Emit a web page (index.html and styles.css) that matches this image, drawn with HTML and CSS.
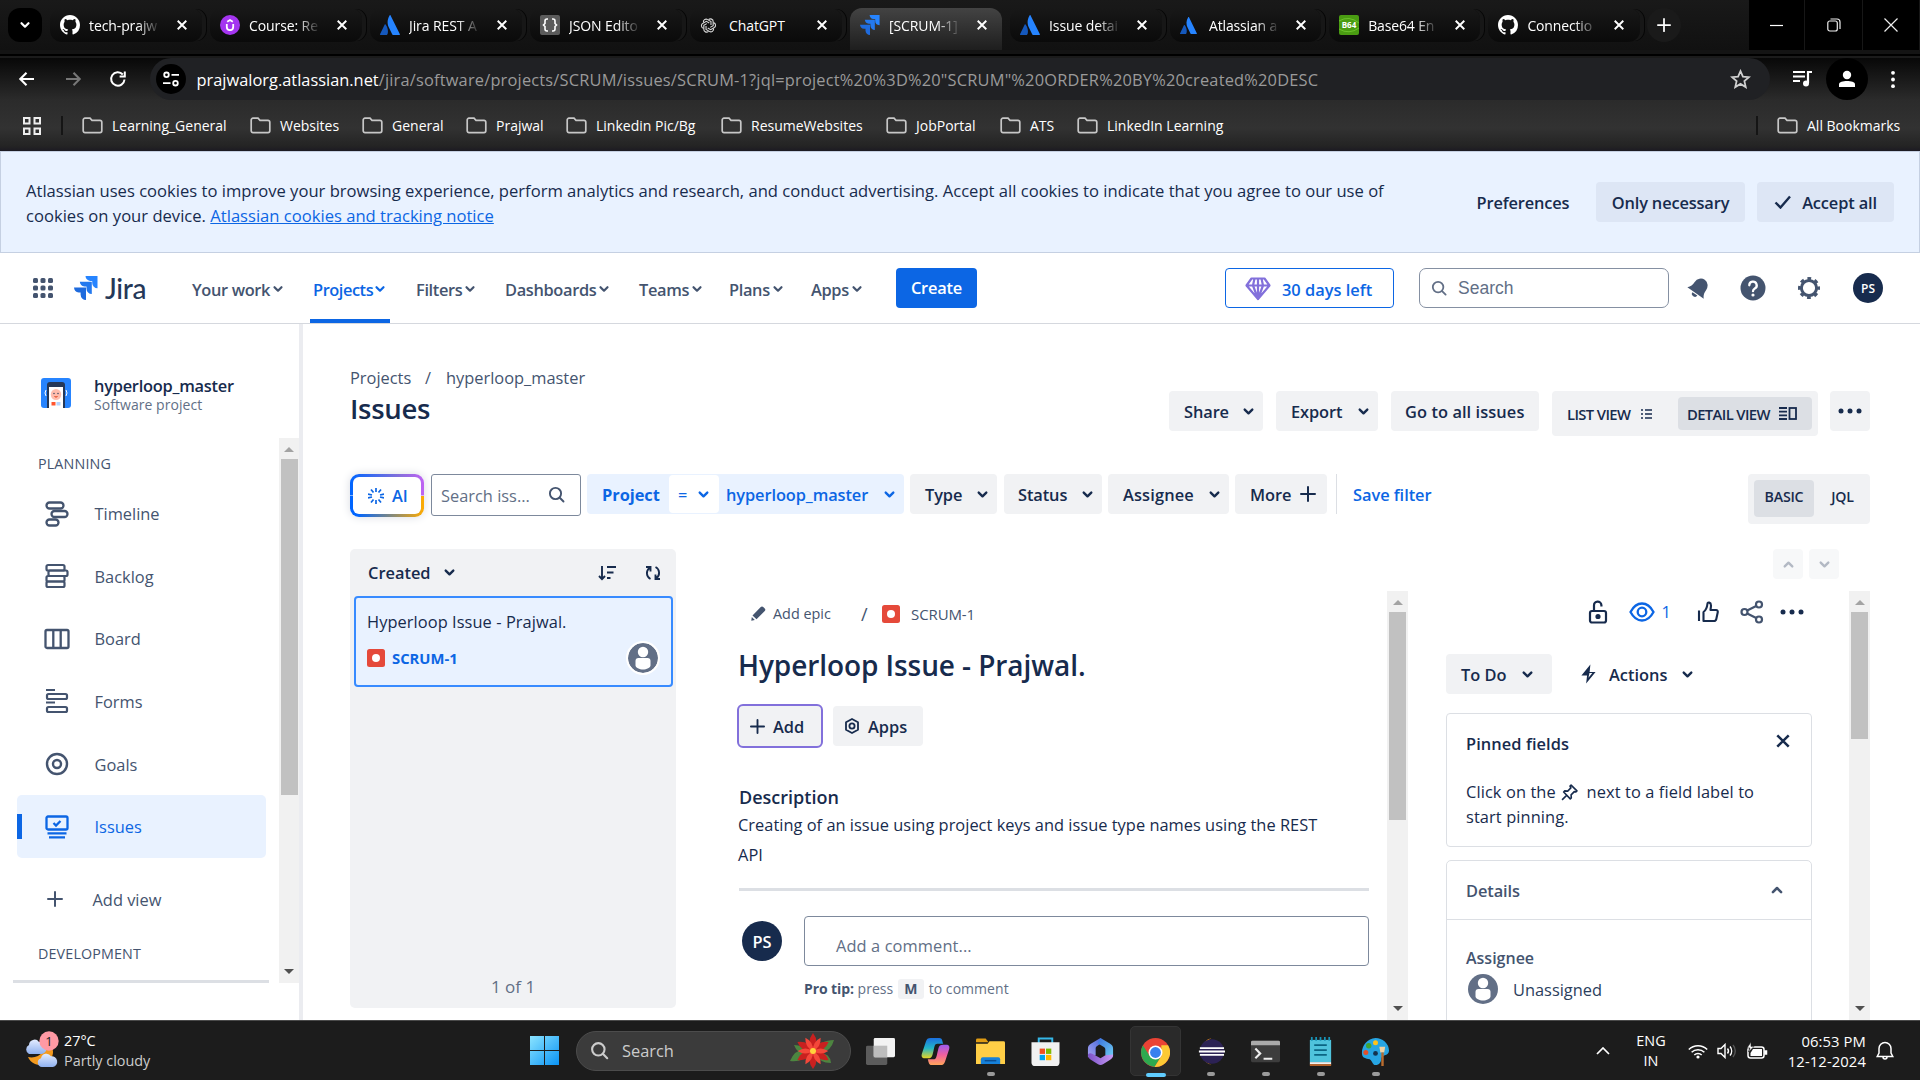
FILE: index.html
```html
<!DOCTYPE html>
<html lang="en">
<head>
<meta charset="utf-8">
<title>[SCRUM-1] Hyperloop Issue - Prajwal. - Jira</title>
<link rel="stylesheet" href="styles.css">
</head>
<body>
<svg class="sprite" aria-hidden="true">
  <symbol id="chev" viewBox="0 0 12 12"><path d="M2.500 4.200l3.500 3.500 3.500-3.500" fill="none" stroke="currentColor" stroke-width="2.200" stroke-linecap="round" stroke-linejoin="round"/></symbol>
  <symbol id="close" viewBox="0 0 14 14"><path d="M2 2l10 10M12 2L2 12" fill="none" stroke="currentColor" stroke-width="2.200"/></symbol>
  <symbol id="plus" viewBox="0 0 16 16"><path d="M8 1v14M1 8h14" fill="none" stroke="currentColor" stroke-width="2" stroke-linecap="round"/></symbol>
  <symbol id="search" viewBox="0 0 18 18"><g fill="none" stroke="currentColor" stroke-width="1.900" stroke-linecap="round"><circle cx="7.500" cy="7.500" r="5.600"/><path d="M12 12l3.500 3.500"/></g></symbol>
  <symbol id="folder" viewBox="0 0 21 17"><path d="M1.200 3A1.800 1.800 0 0 1 3 1.200h5l2 2.200h8A1.800 1.800 0 0 1 19.800 5.200v8.600a1.800 1.800 0 0 1-1.800 1.800H3A1.800 1.800 0 0 1 1.200 13.800z" fill="none" stroke="#c7c7c7" stroke-width="1.700"/></symbol>
  <symbol id="github" viewBox="0 0 16 16"><path fill="#fff" d="M8 0C3.580 0 0 3.580 0 8c0 3.540 2.290 6.530 5.470 7.590.4.070.55-.17.55-.38 0-.19-.01-.82-.01-1.490-2.010.37-2.530-.49-2.690-.94-.09-.23-.48-.94-.82-1.130-.28-.15-.68-.52-.01-.53.63-.01 1.080.58 1.230.82.72 1.210 1.870.87 2.330.66.07-.52.28-.87.51-1.070-1.780-.2-3.640-.89-3.640-3.950 0-.87.31-1.590.82-2.150-.08-.2-.36-1.020.08-2.120 0 0 .67-.21 2.200.82.64-.18 1.320-.27 2-.27s1.360.09 2 .27c1.530-1.040 2.200-.82 2.200-.82.44 1.100.16 1.920.08 2.120.51.56.82 1.270.82 2.150 0 3.070-1.870 3.750-3.650 3.950.29.25.54.73.54 1.480 0 1.070-.01 1.930-.01 2.200 0 .21.15.46.55.38A8.010 8.010 0 0 0 16 8c0-4.420-3.580-8-8-8z"/></symbol>
  <symbol id="atlassian" viewBox="0 0 20 20"><path d="M5.600 9.600c-.3-.4-.8-.3-1 .1L0 19.300c-.1.300.1.600.4.600h6.400c.2 0 .4-.1.500-.3 1.400-2.900.5-7.300-1.700-10z" fill="#1558bc"/><path d="M9.600.4C7 4.500 7.200 9 8.900 12.400l3.400 7.100c.1.200.3.400.6.400h6.600c.3 0 .5-.3.400-.6L10.600.4c-.2-.4-.8-.4-1 0z" fill="#2684ff"/></symbol>
  <symbol id="jira" viewBox="0 0 24 24"><path d="M11.500 0h12v12.300A5.400 5.400 0 0 1 18.200 7V4.900h-2.100A5.400 5.400 0 0 1 11.500 0z" fill="#2684ff"/><path d="M5.800 5.800h12v12.300a5.400 5.400 0 0 1-5.300-5.400v-2.100h-2.100A5.400 5.400 0 0 1 5.800 5.800z" fill="#2479ee"/><path d="M0 11.600h12V24a5.400 5.400 0 0 1-5.400-5.400v-2.100H4.700A5.400 5.400 0 0 1 0 11.600z" fill="#1f6bdd"/></symbol>
  <symbol id="bug" viewBox="0 0 18 18"><rect width="18" height="18" rx="2.500" fill="#e5493a"/><circle cx="9" cy="9" r="4" fill="#fff"/></symbol>
  <symbol id="person" viewBox="0 0 30 30"><circle cx="15" cy="15" r="15" fill="#626f86"/><circle cx="15" cy="9" r="5.200" fill="#fff"/><path d="M7.500 18a3 3 0 0 1 3-3h9a3 3 0 0 1 3 3v4.500c0 2-4 4-7.500 4s-7.500-2-7.500-4z" fill="#fff"/></symbol>
  <symbol id="dots" viewBox="0 0 24 6"><g fill="currentColor"><circle cx="3" cy="3" r="2.500"/><circle cx="12" cy="3" r="2.500"/><circle cx="21" cy="3" r="2.500"/></g></symbol>
</svg>

<header class="browser">
  <div class="tabstrip">
    <div class="tab-menu"><svg width="12" height="12"><use href="#chev"/></svg></div>
    <div class="tab"><svg class="fav"><use href="#github"/></svg><span>tech-prajw</span><svg class="x"><use href="#close"/></svg></div>
    <div class="tab"><svg class="fav" viewBox="0 0 20 20"><circle cx="10" cy="10" r="10" fill="#a435f0"/><path d="M6.800 9v3a3.200 3.200 0 0 0 6.400 0V9M7.200 6.800L10 5l2.800 1.800" fill="none" stroke="#fff" stroke-width="1.800"/></svg><span>Course: Re</span><svg class="x"><use href="#close"/></svg></div>
    <div class="tab"><svg class="fav"><use href="#atlassian"/></svg><span>Jira REST A</span><svg class="x"><use href="#close"/></svg></div>
    <div class="tab"><svg class="fav" viewBox="0 0 20 20"><rect width="20" height="20" rx="2" fill="#5b5b5b"/><path d="M8 4H7a2 2 0 0 0-2 2v2.500L3.500 10 5 11.500V14a2 2 0 0 0 2 2h1M12 4h1a2 2 0 0 1 2 2v2.500l1.500 1.500-1.500 1.500V14a2 2 0 0 1-2 2h-1" fill="none" stroke="#fff" stroke-width="1.600"/></svg><span>JSON Edito</span><svg class="x"><use href="#close"/></svg></div>
    <div class="tab"><svg class="fav gpt" viewBox="0 0 20 20"><g fill="none" stroke="#d8d8d8" stroke-width="1.300"><path id="petal" d="M10 3.200a3.200 3.200 0 0 1 5.500 2.500v4.500l-3.500 2"/><use href="#petal" transform="rotate(60 10 10)"/><use href="#petal" transform="rotate(120 10 10)"/><use href="#petal" transform="rotate(180 10 10)"/><use href="#petal" transform="rotate(240 10 10)"/><use href="#petal" transform="rotate(300 10 10)"/></g></svg><span class="full">ChatGPT</span><svg class="x"><use href="#close"/></svg></div>
    <div class="tab active"><svg class="fav"><use href="#jira"/></svg><span>[SCRUM-1]</span><svg class="x"><use href="#close"/></svg></div>
    <div class="tab"><svg class="fav"><use href="#atlassian"/></svg><span>Issue detai</span><svg class="x"><use href="#close"/></svg></div>
    <div class="tab narrow"><svg class="fav small"><use href="#atlassian"/></svg><span>Atlassian a</span><svg class="x"><use href="#close"/></svg></div>
    <div class="tab narrow"><svg class="fav" viewBox="0 0 20 20"><rect width="20" height="20" rx="2" fill="#4a9c12"/><path d="M0 6q10-6 20 2M0 14q10 6 20-1" stroke="#6cc22c" fill="none"/><text x="10" y="13" text-anchor="middle" class="b64">B64</text></svg><span>Base64 En</span><svg class="x"><use href="#close"/></svg></div>
    <div class="tab narrow"><svg class="fav"><use href="#github"/></svg><span>Connectio</span><svg class="x"><use href="#close"/></svg></div>
    <div class="new-tab"><svg width="14" height="14"><use href="#plus"/></svg></div>
    <div class="win-controls">
      <div><svg width="14" height="14"><path d="M0 7.500h13" stroke="#fff" stroke-width="1.200"/></svg></div>
      <div><svg width="14" height="14" fill="none" stroke="#eee" stroke-width="1.200"><rect x=".8" y="3" width="9.500" height="10" rx="2"/><path d="M3.500 1h6.500a3 3 0 0 1 3 3v7"/></svg></div>
      <div><svg width="14" height="14"><path d="M.5.500l13 13M13.500.500l-13 13" stroke="#eee" stroke-width="1.200"/></svg></div>
    </div>
  </div>
  <div class="toolbar">
    <svg class="tb-ico" viewBox="0 0 18 18"><path d="M16 9H2.500M8.500 2.800L2.300 9l6.200 6.200" fill="none" stroke="#fff" stroke-width="2.100"/></svg>
    <svg class="tb-ico" viewBox="0 0 18 18"><path d="M2 9h13.500M9.500 2.800L15.700 9l-6.200 6.200" fill="none" stroke="#777" stroke-width="2.100"/></svg>
    <svg class="tb-ico" viewBox="0 0 18 18"><path d="M15.500 9.500A6.700 6.700 0 1 1 13.800 4.500M15.800 1.500v5h-5.200" fill="none" stroke="#fff" stroke-width="2"/></svg>
    <div class="omnibox">
      <div class="site-info"><svg width="16" height="16" fill="none" stroke="#fff" stroke-width="1.800"><circle cx="3.500" cy="3.800" r="2.300"/><path d="M8.500 3.800H16M0 12.200h7.500"/><circle cx="12.500" cy="12.200" r="2.300"/></svg></div>
      <div class="url"><b>prajwalorg.atlassian.net</b>/jira/software/projects/SCRUM/issues/SCRUM-1?jql=project%20%3D%20"SCRUM"%20ORDER%20BY%20created%20DESC</div>
      <svg class="star" viewBox="0 0 20 20"><path d="M10 2l2.300 5.300 5.700.5-4.300 3.800 1.300 5.600-5-3-5 3 1.300-5.600L2 7.800l5.700-.5z" fill="none" stroke="#d0d0d0" stroke-width="1.700"/></svg>
    </div>
    <svg class="media" viewBox="0 0 20 18"><path d="M0 2h12M0 6.500h12M0 11h7" stroke="#fff" stroke-width="2"/><path d="M15 13V2h4" fill="none" stroke="#fff" stroke-width="2.200"/><circle cx="13" cy="13.500" r="3" fill="#fff"/></svg>
    <div class="profile"><svg width="16" height="18" fill="#fff"><circle cx="8" cy="5" r="4.200"/><path d="M0 17v-2.500C0 11.800 4 11 8 11s8 .8 8 3.500V17z"/></svg></div>
    <svg class="kebab" viewBox="0 0 6 20" fill="#fff"><circle cx="3" cy="3" r="2"/><circle cx="3" cy="10" r="2"/><circle cx="3" cy="17" r="2"/></svg>
  </div>
  <div class="bookmarks">
    <svg class="apps-grid" viewBox="0 0 18 18" fill="none" stroke="#eee" stroke-width="2"><rect x="1" y="1" width="5.500" height="5.500"/><rect x="11.500" y="1" width="5.500" height="5.500"/><rect x="1" y="11.500" width="5.500" height="5.500"/><rect x="11.500" y="11.500" width="5.500" height="5.500"/></svg>
    <i class="bm-sep"></i>
    <div class="bm"><svg><use href="#folder"/></svg>Learning_General</div>
    <div class="bm"><svg><use href="#folder"/></svg>Websites</div>
    <div class="bm"><svg><use href="#folder"/></svg>General</div>
    <div class="bm"><svg><use href="#folder"/></svg>Prajwal</div>
    <div class="bm"><svg><use href="#folder"/></svg>Linkedin Pic/Bg</div>
    <div class="bm"><svg><use href="#folder"/></svg>ResumeWebsites</div>
    <div class="bm"><svg><use href="#folder"/></svg>JobPortal</div>
    <div class="bm"><svg><use href="#folder"/></svg>ATS</div>
    <div class="bm"><svg><use href="#folder"/></svg>LinkedIn Learning</div>
    <i class="bm-sep"></i>
    <div class="bm"><svg><use href="#folder"/></svg>All Bookmarks</div>
  </div>
</header>

<section class="cookie">
  <p>Atlassian uses cookies to improve your browsing experience, perform analytics and research, and conduct advertising. Accept all cookies to indicate that you agree to our use of<br>cookies on your device. <a>Atlassian cookies and tracking notice</a></p>
  <div class="ck plain">Preferences</div>
  <div class="ck necessary">Only necessary</div>
  <div class="ck accept"><svg width="18" height="14"><path d="M1.500 7.500l5 5L16 1.500" fill="none" stroke="currentColor" stroke-width="2.400"/></svg>Accept all</div>
</section>

<nav class="topnav">
  <svg class="switcher" viewBox="0 0 20 20" fill="#44546f"><g id="r3"><rect width="5" height="5" rx="1.500"/><rect x="7.500" width="5" height="5" rx="1.500"/><rect x="15" width="5" height="5" rx="1.500"/></g><use href="#r3" y="7.500"/><use href="#r3" y="15"/></svg>
  <svg class="jira-mark"><use href="#jira"/></svg>
  <span class="jira-word">Jira</span>
  <div class="menu">
    <div>Your work<svg><use href="#chev"/></svg></div>
    <div class="on">Projects<svg><use href="#chev"/></svg></div>
    <div>Filters<svg><use href="#chev"/></svg></div>
    <div>Dashboards<svg><use href="#chev"/></svg></div>
    <div>Teams<svg><use href="#chev"/></svg></div>
    <div>Plans<svg><use href="#chev"/></svg></div>
    <div>Apps<svg><use href="#chev"/></svg></div>
  </div>
  <div class="create">Create</div>
  <div class="trial"><svg width="26" height="24" viewBox="0 0 26 24" fill="none" stroke="#8270db" stroke-width="2.200" stroke-linejoin="round"><path d="M6.500 1.500h13l5 7L13 22 1.500 8.500zM1.500 8.500h23M9.500 1.500L8 8.500 13 22l5-13.500-1.500-7M13 1.500V22"/></svg>30 days left</div>
  <div class="search-box"><svg width="17" height="17"><use href="#search"/></svg>Search</div>
  <div class="nav-icons">
    <svg width="24" height="24" viewBox="0 0 24 24"><g transform="rotate(35 12 12)" fill="#44546f"><path d="M2 18C4.500 15.500 5 13 5 9.500A7 7.500 0 0 1 19 9.500c0 3.500.5 6 3 8.500z"/><path d="M9 19.200h6a3 2.800 0 0 1-6 0z"/></g></svg>
    <svg width="26" height="26" viewBox="0 0 26 26"><circle cx="13" cy="13" r="12.500" fill="#44546f"/><path d="M9.300 10.300a3.700 3.700 0 1 1 5.500 3.200c-1.300.8-1.800 1.300-1.800 2.700" fill="none" stroke="#fff" stroke-width="2.300" stroke-linecap="round"/><circle cx="13" cy="20" r="1.600" fill="#fff"/></svg>
    <svg width="24" height="24" viewBox="0 0 24 24" fill="none" stroke="#44546f"><circle cx="12" cy="12" r="7.600" stroke-width="3"/><circle cx="12" cy="12" r="9.600" stroke-width="2.800" stroke-dasharray="3.770 3.770" stroke-dashoffset="1.900"/></svg>
    <div class="me">PS</div>
  </div>
</nav>

<div class="app">
  <aside class="sidebar">
    <div class="project">
      <svg width="30" height="30" viewBox="0 0 30 30"><rect width="30" height="30" rx="3" fill="#2684ff"/><path d="M6 30V7a3 3 0 0 1 3-3h12a3 3 0 0 1 3 3v23z" fill="#253858"/><path d="M8 9h14v21H8z" fill="#fff"/><ellipse cx="15" cy="16.500" rx="5.200" ry="5.500" fill="#ffbdad"/><circle cx="13" cy="15.500" r=".7" fill="#253858"/><circle cx="17" cy="15.500" r=".7" fill="#253858"/><path d="M13.500 18.500q1.500 1.200 3 0" stroke="#de350b" fill="none"/><path d="M10.500 24h4v3.500h-4z" fill="#ff5630"/><path d="M15.500 24h4v3.500h-4z" fill="#b3d4ff"/><path d="M5 12q-2 3 0 6M25 12q2 3 0 6" stroke="#fff" fill="none"/></svg>
      <div><b>hyperloop_master</b><small>Software project</small></div>
    </div>
    <div class="side-body">
      <div class="side-list">
        <h4>PLANNING</h4>
        <div class="item"><svg viewBox="0 0 26 26" fill="none" stroke="currentColor" stroke-width="2.300"><rect x="2.500" y="1.500" width="17" height="6" rx="3"/><rect x="7.500" y="10" width="16" height="6" rx="3"/><rect x="2.500" y="18.500" width="12" height="6" rx="3"/></svg>Timeline</div>
        <div class="item"><svg viewBox="0 0 26 26" fill="none" stroke="currentColor" stroke-width="2.200"><rect x="2.500" y="2" width="18" height="5.500" rx="1.500"/><rect x="4.500" y="7.500" width="19" height="5.500" rx="1.500"/><rect x="2.500" y="13" width="18" height="5.500" rx="1.500"/><rect x="2.500" y="18.500" width="18" height="5.500" rx="1.500"/></svg>Backlog</div>
        <div class="item"><svg viewBox="0 0 26 26" fill="none" stroke="currentColor" stroke-width="2.300"><rect x="1.500" y="4" width="23" height="18" rx="1.500"/><path d="M9.300 4v18M16.700 4v18"/></svg>Board</div>
        <div class="item"><svg viewBox="0 0 26 26" fill="none" stroke="currentColor" stroke-width="2.200"><path d="M2 2h9M2 14.500h9"/><rect x="3" y="6" width="20" height="5" rx="1.500"/><rect x="3" y="19" width="20" height="5" rx="1.500"/></svg>Forms</div>
        <div class="item"><svg viewBox="0 0 26 26" fill="none" stroke="currentColor" stroke-width="2.400"><circle cx="13" cy="13" r="10"/><circle cx="13" cy="13" r="4"/></svg>Goals</div>
        <div class="item sel"><svg viewBox="0 0 26 26" fill="none" stroke="currentColor" stroke-width="2.300"><rect x="2.500" y="2.500" width="21" height="13" rx="1.500"/><path d="M9.500 9l2.500 2.500L16.500 7M3.500 19.300h19M5 23.300h16"/></svg>Issues</div>
        <div class="item add"><svg viewBox="0 0 16 16"><use href="#plus"/></svg>Add view</div>
        <h4 class="dev">DEVELOPMENT</h4>
      </div>
      <div class="scroll"><i class="up"></i><i class="thumb t1"></i><i class="down"></i></div>
    </div>
  </aside>

  <main class="main">
    <div class="crumbs"><span>Projects</span><span>/</span><span>hyperloop_master</span></div>
    <div class="head">
      <h1>Issues</h1>
      <div class="btn share">Share<svg><use href="#chev"/></svg></div>
      <div class="btn export">Export<svg><use href="#chev"/></svg></div>
      <div class="btn goall">Go to all issues</div>
      <div class="views">
        <div class="lv">LIST VIEW<svg width="11" height="10" stroke="currentColor" stroke-width="1.700"><path d="M0 1h2M4 1h7M0 5h2M4 5h7M0 9h2M4 9h7"/></svg></div>
        <div class="dv">DETAIL VIEW<svg width="18" height="13" fill="none" stroke="currentColor" stroke-width="1.800"><path d="M0 1h8M0 4.600h8M0 8.300h8M0 12h8"/><rect x="10.500" y="1" width="6.500" height="11"/></svg></div>
      </div>
      <div class="btn more"><svg><use href="#dots"/></svg></div>
    </div>
    <div class="filters">
      <div class="ai"><svg width="16" height="16" viewBox="0 0 16 16" stroke="currentColor" stroke-width="1.700" fill="none"><path d="M8 0v4M8 12v4M0 6l4 1M12 9l4 1M0 10l4-1M12 7l4-1M3 1.500l2.500 3M10.500 11.500l2.500 3M13 1.500l-2.500 3M5.500 11.500l-2.500 3"/></svg>AI</div>
      <div class="find">Search iss...<svg width="18" height="18"><use href="#search"/></svg></div>
      <div class="clause"><b>Project</b><div class="op">=<svg><use href="#chev"/></svg></div><span>hyperloop_master</span><svg><use href="#chev"/></svg></div>
      <div class="btn type">Type<svg><use href="#chev"/></svg></div>
      <div class="btn status">Status<svg><use href="#chev"/></svg></div>
      <div class="btn assignee">Assignee<svg><use href="#chev"/></svg></div>
      <div class="btn moref">More<svg><use href="#plus"/></svg></div>
      <i class="vline"></i>
      <span class="save">Save filter</span>
      <div class="modes"><span class="on">BASIC</span><span>JQL</span></div>
    </div>

    <div class="split">
      <section class="list">
        <div class="list-head"><span>Created</span><svg class="c"><use href="#chev"/></svg>
          <svg class="sort" viewBox="0 0 18 16" fill="none" stroke="currentColor" stroke-width="1.900"><path d="M4 1v13M1 11l3 3.200L7 11M9 2h9M9 7.500h6.500M9 13h3.500"/></svg>
          <svg class="ref" viewBox="0 0 16 16" fill="none" stroke="currentColor" stroke-width="1.900"><path d="M5.500 14A6.500 6.500 0 0 1 4.500 3M1 2h4.500v4.500M10.500 2a6.500 6.500 0 0 1 1 11M15 14h-4.500V9.500"/></svg></div>
        <div class="card">
          <p>Hyperloop Issue - Prajwal.</p>
          <div><svg class="bug"><use href="#bug"/></svg><b>SCRUM-1</b><svg class="pers"><use href="#person"/></svg></div>
        </div>
        <div class="count">1 of 1</div>
      </section>

      <div class="detail">
        <div class="pager"><div><svg class="flip"><use href="#chev"/></svg></div><div><svg><use href="#chev"/></svg></div></div>
        <div class="cols">
          <section class="content">
            <div class="path"><svg width="15" height="15" viewBox="0 0 15 15" fill="#44546f"><path d="M1.500 9.500L9.500 1.300a2 2 0 0 1 3 0l1 1a2 2 0 0 1 0 3L5.500 13.300z"/><path d="M.8 11l3 3L.3 14.700z"/></svg><span class="epic">Add epic</span><span class="sl">/</span><svg class="bug"><use href="#bug"/></svg><span>SCRUM-1</span></div>
            <h2>Hyperloop Issue - Prajwal.</h2>
            <div class="actions">
              <div class="add-btn"><svg width="15" height="15"><use href="#plus"/></svg>Add</div>
              <div class="apps-btn"><svg width="14" height="16" viewBox="0 0 14 16" fill="none" stroke="currentColor" stroke-width="1.800"><path d="M7 1l6 3.200v7.600L7 15l-6-3.200V4.200z" stroke-linejoin="round"/><circle cx="7" cy="8" r="2.600"/></svg>Apps</div>
            </div>
            <h3>Description</h3>
            <p class="desc">Creating of an issue using project keys and issue type names using the REST<br>API</p>
            <hr>
            <div class="comment"><div class="ava">PS</div><div class="field">Add a comment...</div></div>
            <div class="tip"><b>Pro tip:</b> press <kbd>M</kbd> to comment</div>
          </section>
          <div class="scroll s2"><i class="up"></i><i class="thumb t2"></i><i class="down"></i></div>
          <section class="side">
            <div class="tools">
              <svg class="lock" viewBox="0 0 20 24" fill="none" stroke="#172b4d" stroke-width="2.200"><rect x="2" y="11" width="16" height="11.500" rx="2"/><path d="M6 11V5.500a3.700 3.700 0 0 1 7.400-.5v1.500"/><circle cx="10" cy="16.500" r="1.500" fill="#172b4d"/></svg>
              <svg class="eye" viewBox="0 0 26 20" fill="none" stroke="#0c66e4" stroke-width="2.300"><path d="M1.500 10Q6 1.500 13 1.500T24.500 10Q20 18.500 13 18.500T1.500 10z"/><circle cx="13" cy="10" r="4.300"/></svg>
              <span>1</span>
              <svg class="like" viewBox="0 0 22 22" fill="none" stroke="#172b4d" stroke-width="2.100" stroke-linejoin="round"><path d="M2 9.500V20M6.500 11c3-2 3.500-4 4-8.500 0-1.500 3.500-1.500 3.500 2 0 2-.5 3.500-.5 4.500H19c1.500 0 2 1 1.700 2.500l-1.400 6.500c-.3 1.300-1 2-2.300 2H6.500z"/></svg>
              <svg class="shr" viewBox="0 0 24 24" fill="none" stroke="#44546f" stroke-width="2.200"><circle cx="19" cy="4.500" r="3"/><circle cx="4.500" cy="12" r="3"/><circle cx="19" cy="19.500" r="3"/><path d="M7.200 10.500l9-4.600M7.200 13.500l9 4.600"/></svg>
              <svg class="dts"><use href="#dots"/></svg>
            </div>
            <div class="state"><div class="btn todo">To Do<svg><use href="#chev"/></svg></div>
              <svg class="bolt" viewBox="0 0 18 22"><path d="M11 1L1.500 12.500h6L6.500 21 16.500 9h-6.300z" fill="#172b4d"/><path d="M10 10h3l-4 5z" fill="#fff"/></svg><span>Actions</span><svg class="c"><use href="#chev"/></svg></div>
            <div class="pinned"><div class="pt"><b>Pinned fields</b><svg><use href="#close"/></svg></div>
              <p>Click on the <svg width="17" height="17" viewBox="0 0 16 16" fill="none" stroke="currentColor" stroke-width="1.500" stroke-linejoin="round"><path d="M9.500 1l5.500 5.500-1 1-1.500-.3-3 3 .2 2.800-1 1L2.500 7.500l1-1 2.800.2 3-3L8.500 2zM5.300 10.700L1 15"/></svg> next to a field label to<br>start pinning.</p></div>
            <div class="details"><div class="dh">Details<svg class="flip"><use href="#chev"/></svg></div>
              <div class="db"><b>Assignee</b><div><svg class="pers2"><use href="#person"/></svg>Unassigned</div></div></div>
          </section>
          <div class="scroll s3"><i class="up"></i><i class="thumb t3"></i><i class="down"></i></div>
        </div>
      </div>
    </div>
  </main>
</div>

<footer class="taskbar">
  <div class="weather">
    <svg width="36" height="40" viewBox="0 0 36 40"><defs><linearGradient id="cl" x1="0" y1="0" x2="0" y2="1"><stop offset="0" stop-color="#e3ecff"/><stop offset="1" stop-color="#8fb0ee"/></linearGradient></defs><path d="M27 15a12 12 0 0 1-24 10 15 15 0 0 0 17-8z" fill="#f39a1e" transform="translate(0 1)"/><path d="M4 23a5 5 0 0 1 0-9 5.500 5.500 0 0 1 10-3 5 5 0 0 1 3 12z" fill="url(#cl)"/><path d="M17 36a4.500 4.500 0 0 1-1-8.800 5.500 5.500 0 0 1 10-2 5.500 5.500 0 0 1 2 10.800z" fill="url(#cl)"/><circle cx="24" cy="10" r="9.700" fill="#ff99a4"/><text x="24" y="15" text-anchor="middle" class="badge">1</text></svg>
    <div><span>27°C</span><span class="dim">Partly cloudy</span></div>
  </div>
  <svg class="win" viewBox="0 0 29 29"><defs><linearGradient id="wg" x1="0" y1="0" x2="1" y2="1"><stop offset="0" stop-color="#8be4ff"/><stop offset="1" stop-color="#0a93f5"/></linearGradient></defs><path d="M0 0h14v14H0zM15 0h14v14H15zM0 15h14v14H0zM15 15h14v14H15z" fill="url(#wg)"/></svg>
  <div class="tsearch"><svg width="20" height="20"><use href="#search"/></svg><span>Search</span>
    <svg class="flower" viewBox="0 0 44 36"><g fill="#4d8540"><path d="M0 28q6-14 18-10-4 12-18 10zM44 7q-14 0-18 11 14 4 18-11zM30 20q10 0 11 10-12 0-13-8zM4 12q10 0 12 8-8 2-12-8z"/></g><g transform="translate(23 18)"><g fill="#c9201f"><path id="pt" d="M0 0Q-7-9 0-18 7-9 0 0z"/><use href="#pt" transform="rotate(60)"/><use href="#pt" transform="rotate(120)"/><use href="#pt" transform="rotate(180)"/><use href="#pt" transform="rotate(240)"/><use href="#pt" transform="rotate(300)"/></g><g fill="#f4473a" transform="rotate(30) scale(.85)"><path id="pu" d="M0 0Q-6-9 0-18 6-9 0 0z"/><use href="#pu" transform="rotate(60)"/><use href="#pu" transform="rotate(120)"/><use href="#pu" transform="rotate(180)"/><use href="#pu" transform="rotate(240)"/><use href="#pu" transform="rotate(300)"/></g><circle r="3" fill="#ffd23c"/></g></svg></div>
  <div class="apps">
    <div><svg viewBox="0 0 30 30"><rect y="9" width="22" height="20" rx="1.500" fill="#5c5c5c"/><rect x="8" y="1" width="22" height="20" rx="1.500" fill="#f3f3f3"/><path d="M8 9h14v12H8z" fill="#bdbdbd"/></svg></div>
    <div><svg viewBox="0 0 30 30"><defs><linearGradient id="ca" x1="0" y1="0" x2="0" y2="1"><stop offset="0" stop-color="#1b6fe0"/><stop offset=".5" stop-color="#22b6c8"/><stop offset="1" stop-color="#e8d423"/></linearGradient><linearGradient id="cb" x1="0" y1="0" x2="0" y2="1"><stop offset="0" stop-color="#9a5bf0"/><stop offset=".5" stop-color="#f0609e"/><stop offset="1" stop-color="#ffa45a"/></linearGradient></defs><path d="M10 1h9c3 0 3 3 4 6h-6c-3 0-3 3-4 7l-1 4c-.7 3-2 4-5 4H4c-3 0-4-2-3-5L5 5c1-3 2-4 5-4z" fill="url(#ca)"/><path d="M20 29h-9c-3 0-3-3-4-6h6c3 0 3-3 4-7l1-4c.7-3 2-4 5-4h3c3 0 4 2 3 5l-4 12c-1 3-2 4-5 4z" fill="url(#cb)"/></svg></div>
    <div class="run"><svg viewBox="0 0 30 30"><path d="M0 3a1.500 1.500 0 0 1 1.500-1.500H10l3 4H0z" fill="#e09c13"/><path d="M0 7h12l2-2.500h14.500A1.500 1.500 0 0 1 30 6v22H0z" fill="#ffce46"/><path d="M5 28v-5a2 2 0 0 1 2-2h16a2 2 0 0 1 2 2v5z" fill="#1681da"/><path d="M9 24.500h12" stroke="#0b4e92" stroke-width="1.500"/></svg></div>
    <div><svg viewBox="0 0 30 30"><path d="M8 7V1.500h14V7" fill="none" stroke="#35b7e8" stroke-width="2"/><path d="M.5 5.500h29V26a4 4 0 0 1-4 4h-21a4 4 0 0 1-4-4z" fill="#f1f1f1"/><path d="M9 12h5.500v5.500H9z" fill="#f25022"/><path d="M15.500 12H21v5.500h-5.500z" fill="#7fba00"/><path d="M9 18.500h5.500V24H9z" fill="#00a4ef"/><path d="M15.500 18.500H21V24h-5.500z" fill="#ffb900"/></svg></div>
    <div><svg viewBox="0 0 30 30"><defs><linearGradient id="ma" x1="1" y1="0" x2="0" y2="1"><stop offset="0" stop-color="#3f63d8"/><stop offset="1" stop-color="#a9a4f2"/></linearGradient><linearGradient id="mb" x1="0" y1="0" x2="1" y2="1"><stop offset="0" stop-color="#3a70dd"/><stop offset="1" stop-color="#6fd0f5"/></linearGradient><linearGradient id="mc" x1="0" y1="0" x2="1" y2="0"><stop offset="0" stop-color="#7c52c8"/><stop offset="1" stop-color="#c79af5"/></linearGradient></defs><path d="M15 1L5 7C3 8.300 2 9.500 2 12v9l8-2v-7c0-1.500.5-2 1.500-2.700L18 5z" fill="url(#ma)"/><path d="M15 1l10 6c2 1.300 3 2.500 3 5v7c0 2-2 3-4 2.500L20 19v-6c0-1.500-.5-2-1.500-2.700L12 6.500z" fill="url(#mb)"/><path d="M2 19c0-2 2-3 5-1.500l8 4.500 5-3 8-1v1c0 2-1 3.500-3 4.500l-7 4.500c-2 1.200-4 1.200-6 0l-7-4.500c-2-1-3-2.500-3-4.500z" fill="url(#mc)"/></svg></div>
    <div class="run cur"><svg viewBox="0 0 30 30"><circle cx="15" cy="15" r="15" fill="#ea4335"/><path d="M2 7.500a15 15 0 0 0 12 22.400l7-11.400H9z" fill="#2da94f"/><path d="M28 7.500a15 15 0 0 1-14 22.400l7.200-11.400L21 7.500z" fill="#fcc934"/><circle cx="15" cy="15" r="7.200" fill="#fff"/><circle cx="15" cy="15" r="5.600" fill="#3880ee"/></svg></div>
    <div class="run"><svg viewBox="0 0 30 30"><path d="M16 1A14.500 14.500 0 0 0 16 29 16 16 0 0 1 16 1z" fill="#f7941e"/><circle cx="16.500" cy="15" r="12.700" fill="#2c2255"/><path d="M4 11.500h25M3 15h27M4 18.500h25" stroke="#fff" stroke-width="2"/></svg></div>
    <div class="run"><svg viewBox="0 0 30 30"><rect y="4" width="30" height="22" rx="1.500" fill="#3d3d3d"/><path d="M0 8.500V5.500A1.500 1.500 0 0 1 1.500 4h27A1.500 1.500 0 0 1 30 5.500v3z" fill="#aaa"/><path d="M4.500 12l5 5-5 5M13 22.500h9" fill="none" stroke="#eee" stroke-width="2.200"/></svg></div>
    <div class="run"><svg viewBox="0 0 30 30"><path d="M4 3h22v23H4z" fill="#4fc3dc"/><path d="M4 26h22v2.500H4z" fill="#f1f1f1"/><path d="M4 28h22v2H4z" fill="#b4622a"/><path d="M6 0v4M10.500 0v4M15 0v4M19.500 0v4M24 0v4" stroke="#1794b8" stroke-width="1.800"/><path d="M8.500 8.500h13M8.500 13.500h13M8.500 18.500h13" stroke="#0b6583" stroke-width="1.800"/></svg></div>
    <div class="run"><svg viewBox="0 0 30 30"><path d="M15 1a14 14 0 0 1 14 13c0 6-7 4-8 8 0 4-2 7-6 7-3 0-3-4-6-6-4-1-8-1-8-6A15 15 0 0 1 15 1z" fill="#27a5e3"/><circle cx="8" cy="9" r="2.800" fill="#3fa535"/><circle cx="15" cy="6" r="2.600" fill="#ffc21a"/><circle cx="5" cy="16" r="2.600" fill="#e2502a"/><circle cx="15" cy="17" r="2.500" fill="#14324e"/><path d="M19 10h6l-1 6h-4z" fill="#f0d3a5"/><path d="M21 16h2.500v14H21z" fill="#b96c2f"/></svg></div>
  </div>
  <div class="tray">
    <svg class="caret" viewBox="0 0 14 8"><path d="M1 7l6-6 6 6" fill="none" stroke="#fff" stroke-width="1.700"/></svg>
    <div class="lang"><span>ENG</span><span>IN</span></div>
    <svg class="wifi" viewBox="0 0 20 16" fill="none" stroke="#fff" stroke-width="1.500"><path d="M.8 6.500a13 13 0 0 1 18.400 0M3.600 9.300a9 9 0 0 1 12.800 0M6.300 12a5.200 5.200 0 0 1 7.400 0"/><circle cx="10" cy="14" r="1.600" fill="#fff" stroke="none"/></svg>
    <svg class="vol" viewBox="0 0 20 16" fill="none" stroke="#fff" stroke-width="1.400"><path d="M1 5.500h3L8 1.500v13L4 10.500H1z"/><path d="M10.500 5.500a4 4 0 0 1 0 5M13 3.500a7 7 0 0 1 0 9"/><path d="M16 2a9 9 0 0 1 0 12" stroke="#555"/></svg>
    <svg class="bat" viewBox="0 0 22 18" fill="none" stroke="#fff" stroke-width="1.500"><rect x="2" y="5" width="16" height="11" rx="2.500"/><path d="M7 7h9v7H4.500V11z" fill="#fff" stroke="none"/><path d="M19 9h1.500v3H19z" fill="#fff"/><path d="M5 0L1 6h3L2.500 10 8 4.500H5z" fill="#fff" stroke="#1c1c1c" stroke-width=".6"/></svg>
    <div class="clock"><span>06:53 PM</span><span>12-12-2024</span></div>
    <svg class="bell" viewBox="0 0 18 20" fill="none" stroke="#fff" stroke-width="1.500"><path d="M9 1.500a6 6 0 0 0-6 6V12l-1.800 3.500h15.600L15 12V7.500a6 6 0 0 0-6-6zM7 16a2 2 0 0 0 4 0"/></svg>
  </div>
</footer>
</body>
</html>
```
FILE: styles.css
```css
* { box-sizing: border-box; }
body { margin: 0; width: 1920px; height: 1080px; overflow: hidden; display: flex; flex-direction: column; background: #fff; color: #172b4d; font: 16.4px "Open Sans", "Noto Sans", sans-serif; white-space: nowrap; }
svg { display: block; flex: none; }
p, h1, h2, h3, h4 { margin: 0; font-weight: 400; }
b { font-weight: 600; }
.sprite { position: absolute; width: 0; height: 0; }

/* browser chrome */
.browser { height: 151px; flex: none; background: #171717; color: #fff; font-size: 14px; }
.tabstrip { height: 50px; display: flex; align-items: center; background: linear-gradient(#191919, #111); }
.tab-menu { width: 34px; height: 34px; margin: 0 8px; border-radius: 12px; background: #000; display: grid; place-items: center; }
.tab { width: 152px; height: 34px; margin-right: 8px; padding-left: 10px; border-radius: 12px; display: flex; align-items: center; background: linear-gradient(#181818, #0a0a0a); box-shadow: 5px 0 0 -1px #171717, 6px 0 0 -1px #060606; }
.tab.narrow { width: 151.2px; }
.tab span { width: 74px; margin: 0 13px 0 9px; letter-spacing: -.1px; mask-image: linear-gradient(90deg, #000 65%, transparent 97%); }
.tab .full { mask-image: none; }
.tab.narrow span { width: 72.5px; letter-spacing: -.15px; }
.tab .fav { width: 20px; height: 20px; }
.tab .gpt { width: 17px; height: 17px; margin-right: 3px; }
.tab .fav.small { width: 17px; height: 17px; margin-right: 3px; }
.tab .x { width: 12px; height: 12px; }
.tab.active { height: 42px; padding-bottom: 8px; border-radius: 12px 12px 0 0; align-self: flex-end; background: linear-gradient(#434343, #1e1e1e); box-shadow: none; }
.b64 { font: 700 8px "Open Sans", sans-serif; fill: #fff; }
.new-tab { width: 34px; height: 34px; margin-left: -1px; border-radius: 17px; background: #1a1a1a; display: grid; place-items: center; }
.win-controls { width: 171px; height: 50px; margin-left: auto; display: grid; grid-template-columns: 56px 58px 57px; background: #000; }
.win-controls div { display: grid; place-items: center; border-right: 1px solid #171717; }
.toolbar { height: 50px; padding-top: 4px; display: flex; align-items: center; border-top: 4px solid #141414; background: linear-gradient(#000 0 2px, #1b1b1b 2px 4px, #080808 4px, #2b2b2b); }
.tb-ico { width: 18px; height: 18px; margin-left: 18px; margin-right: 9.500px; }
.omnibox { width: 1620px; height: 42px; margin-left: 13px; padding: 0 19px 0 6px; border-radius: 21px; background: #202124; display: flex; align-items: center; }
.site-info { width: 30px; height: 30px; border-radius: 50%; background: #000; display: grid; place-items: center; }
.url { margin-left: 11px; font-size: 16.4px; color: #9a9a9a; flex: 1; letter-spacing: .19px; }
.url b { font-weight: 400; color: #fff; letter-spacing: 0; }
.star { width: 21px; height: 21px; }
.media { width: 20px; height: 18px; margin-left: 23px; }
.profile { width: 42px; height: 42px; margin-left: 13px; border-radius: 50%; background: #000; display: grid; place-items: center; }
.kebab { width: 6px; height: 19px; margin-left: 22px; }
.bookmarks { height: 51px; padding-left: 23px; display: grid; grid-template-columns: 38px 21px 168px 112px 104px 100px 155px 165px 114px 77px 679px 21px 140px; align-items: center; background: linear-gradient(#2b2b2b, #323232 55%, #242424 90%, #1c1a22); }
.apps-grid { width: 18px; height: 18px; }
.bm-sep { width: 2px; height: 19px; background: #151515; }
.bm { display: flex; align-items: center; gap: 9px; }
.bm svg { width: 21px; height: 17px; }

/* cookie banner */
.cookie { height: 102px; flex: none; padding-left: 25px; display: flex; align-items: center; background: #e9f2ff; border: 1px solid #c5d0e2; line-height: 25px; }
.cookie p { width: 1436px; padding-top: 2px; font-size: 16.600px; }
.cookie a { color: #0c66e4; text-decoration: underline; }
.ck { height: 40px; display: flex; align-items: center; justify-content: center; font-weight: 600; border-radius: 4px; background: #dde6f5; letter-spacing: -.15px; }
.ck.plain { width: 122px; background: none; margin-right: 12px; }
.ck.necessary { width: 149px; margin-right: 12px; }
.ck.accept { width: 137px; gap: 10px; }

/* top navigation */
.topnav { height: 71px; flex: none; padding-left: 33px; display: flex; align-items: center; border-bottom: 1px solid #d5d8de; color: #44546f; font-weight: 600; }
.switcher { width: 20px; height: 20px; }
.jira-mark { width: 24px; height: 24px; margin-left: 21px; }
.jira-word { width: 87px; margin-left: 7px; font: 500 28px/30px Lato, sans-serif; letter-spacing: -.3px; color: #253858; }
.menu { height: 70px; display: grid; grid-template-columns: 121px 103px 89px 134px 90px 82px 85px; letter-spacing: -.35px; }
.menu div { display: flex; align-items: center; gap: 2px; padding-top: 2px; }
.menu svg { width: 12px; height: 12px; }
.menu .on { margin: 0 26px 0 -3px; padding: 6px 0 0 3px; gap: 1px; color: #0c66e4; border-bottom: 4px solid #0c66e4; letter-spacing: -.45px; }
.create { width: 81px; height: 40px; line-height: 40px; text-align: center; border-radius: 4px; background: #0c66e4; color: #fff; letter-spacing: -.2px; }
.trial { width: 169px; height: 40px; margin-left: 248px; padding: 2px 0 0 19px; display: flex; gap: 11px; align-items: center; border: 1.500px solid #0c66e4; border-radius: 4px; color: #0c66e4; letter-spacing: 0; }
.search-box { width: 250px; height: 40px; margin-left: 25px; padding-left: 11px; display: flex; gap: 10px; align-items: center; border: 1px solid #8590a2; border-radius: 7px; color: #626f86; font: 17.5px "Liberation Sans", sans-serif; }
.nav-icons { margin-left: 17px; display: grid; grid-template-columns: 55px 53px 59px 30px; justify-items: center; align-items: center; width: 197px; }
.nav-icons > :nth-child(-n+3) { margin-right: 29px; }
.me, .ava { border-radius: 50%; background: #172b4d; color: #fff; display: grid; place-items: center; }
.me { width: 30px; height: 30px; font-size: 12px; }

.app { height: 696px; flex: none; display: flex; overflow: hidden; }
.sidebar { width: 303px; flex: none; border-right: 4px solid #ebecf0; }
.project { height: 114px; padding: 54px 0 0 41px; display: flex; gap: 23px; }
.project b, .project small { display: block; }
.project b { line-height: 20px; margin-top: -2px; letter-spacing: -.25px; }
.project small { font-size: 14px; line-height: 17px; letter-spacing: .05px; color: #626f86; }
.side-body { display: flex; height: 545px; }
.side-list { width: 256px; margin: 0 10px 0 13px; height: 545px; border-bottom: 3px solid #dcdfe4; color: #44546f; }
.side-list h4 { height: 51px; padding-left: 25px; font: 500 14.300px/51px "Open Sans", sans-serif; letter-spacing: .15px; }
.side-list .dev { height: 26px; line-height: 26px; }
.item { height: 62.600px; width: 249px; margin-left: 4px; padding-left: 27px; display: flex; align-items: center; gap: 24.500px; }
.side-list h4 + .item { margin-top: -6.600px; }
.item svg { width: 26px; height: 26px; }
.item.sel { color: #0c66e4; background: linear-gradient(#0c66e4, #0c66e4) 0 50%/5px 25px no-repeat, #e9f2ff; border-radius: 5px; }
.item.add { height: 83px; padding-left: 30px; gap: 29.500px; }
.item.add svg { width: 16px; height: 16px; }
.scroll { width: 20px; display: flex; flex-direction: column; align-items: center; background: #f1f1f1; }
.scroll .up, .scroll .down { width: 0; border: 5px solid transparent; flex: none; }
.scroll .up { border-bottom-color: #a3a3a3; border-top: 0; margin: 9px 0 7px; }
.scroll .down { border-top-color: #505050; border-bottom: 0; margin: auto 0 9px; }
.thumb { width: 17px; background: #c1c1c1; flex: none; }
.t1 { height: 336px; }
.t2 { height: 208px; }
.t3 { height: 127px; }

/* main area */
.main { width: 1617px; padding: 41px 50px 0 47px; }
.crumbs { height: 26px; display: grid; grid-template-columns: 75px 21px auto; line-height: 25px; color: #44546f; }
.head { height: 83px; display: flex; }
.head h1 { width: 819px; font-size: 27.500px; font-weight: 600; line-height: 36px; letter-spacing: -.3px; }
.btn { height: 40px; padding-left: 15px; display: flex; align-items: center; border-radius: 4px; background: #f1f2f4; font-weight: 600; letter-spacing: -.1px; }
.btn svg { width: 13px; height: 13px; margin: 0 8px 0 auto; }
.share { width: 94px; margin-right: 13px; }
.export { width: 102px; margin-right: 13px; }
.goall { width: 148px; margin-right: 13px; padding-left: 14px; letter-spacing: .08px; }
.views { width: 266px; height: 45px; margin-right: 12px; padding: 6px; display: flex; background: #f1f2f4; border-radius: 4px; font-size: 14.800px; font-weight: 600; letter-spacing: -.62px; }
.views div { height: 33px; padding-left: 10px; display: flex; align-items: center; gap: 11px; border-radius: 4px; }
.views .lv { padding-left: 9px; }
.lv { width: 120px; }
.dv { width: 134px; background: #dcdfe4; }
.views .dv { gap: 9px; padding-left: 9px; }
.head .more { width: 40px; padding: 0 8px; }
.head .more svg { width: 24px; height: 6px; margin: 0; }
.filters { height: 75px; display: flex; }
.ai { width: 74px; height: 43px; padding-left: 15px; display: flex; align-items: center; gap: 8px; border: 3px solid transparent; border-radius: 9px; background: linear-gradient(#fff, #fff) padding-box, linear-gradient(90deg, #0065ff, #8270db 65%, #bf63f3) 0 0/100% 50% no-repeat border-box, linear-gradient(90deg, #0065ff 10%, #ffab00) 0 100%/100% 50% no-repeat border-box; color: #0c66e4; font-weight: 600; box-shadow: 0 0 10px #d9dce2; }
.find { width: 150px; height: 42px; margin: 0 6px 0 7px; padding: 0 14px 0 9px; display: flex; align-items: center; justify-content: space-between; border: 1px solid #7d899c; border-radius: 3px; color: #626f86; }
.find svg { color: #44546f; }
.clause { width: 317px; height: 40px; margin-right: 6px; padding-left: 15px; display: flex; align-items: center; border-radius: 4px; background: #e9f2ff; color: #0c66e4; font-weight: 600; letter-spacing: -.1px; }
.clause b { font-weight: 700; width: 67px; letter-spacing: -.05px; }
.clause svg { width: 13px; height: 13px; }
.clause > svg { margin: 0 8px 0 auto; }
.op { width: 50px; height: 38px; padding-left: 9px; margin-right: 7px; display: flex; align-items: center; gap: 10px; background: #fff; border-radius: 4px; font-weight: 400; }
.type { width: 87px; margin-right: 7px; }
.status { width: 98px; margin-right: 6px; padding-left: 14px; }
.assignee { width: 121px; margin-right: 6px; letter-spacing: .15px; }
.moref { width: 92px; }
.moref svg { width: 16px; height: 16px; margin-right: 11px; }
.vline { width: 1px; height: 40px; margin: 0 16px 0 9px; background: #dcdfe4; }
.save { color: #0c66e4; font-weight: 600; line-height: 41px; letter-spacing: -.05px; }
.modes { width: 122px; height: 50px; margin-left: auto; padding: 6px; display: flex; background: #f1f2f4; border-radius: 4px; font-size: 14.200px; font-weight: 600; letter-spacing: -.2px; line-height: 34px; text-align: center; }
.modes span { width: 57px; flex: none; }
.modes .on { width: 60px; height: 37px; background: #dcdfe4; border-radius: 4px; }

.split { display: flex; height: 471px; }
.list { width: 326px; height: 459px; background: #f1f2f4; border-radius: 5px; display: flex; flex-direction: column; }
.list-head { height: 47px; padding: 0 15px 0 18px; display: flex; align-items: center; font-weight: 600; letter-spacing: 0; }
.list-head span { width: 75px; }
.list-head .c { width: 13px; height: 13px; }
.sort { width: 18px; height: 16px; margin-left: auto; }
.ref { width: 16px; height: 16px; margin-left: 29px; }
.card { width: 319px; height: 91px; margin-left: 4px; padding: 11px 12px 0 11px; border: 2.500px solid #388bff; border-radius: 4px; background: #e9f2ff; }
.card p { line-height: 26px; letter-spacing: .07px; }
.card div { display: flex; align-items: center; height: 45px; color: #0c66e4; font-size: 14.800px; }
.card b { margin-left: 7px; font-weight: 700; }
.bug { width: 18px; height: 18px; }
.pers { width: 34px; height: 34px; margin-left: auto; padding: 2px; background: #fff; border-radius: 50%; margin-right: -1px; }
.count { margin-top: auto; height: 42px; line-height: 42px; text-align: center; color: #626f86; font-size: 17px; }

.detail { width: 1194px; }
.pager { height: 42px; padding-right: 31px; display: flex; justify-content: flex-end; gap: 6px; color: #b3b9c4; }
.pager div { width: 30px; height: 30px; border-radius: 4px; background: #f7f8f9; display: grid; place-items: center; }
.pager svg { width: 13px; height: 13px; }
.flip { transform: scaleY(-1); }
.cols { display: flex; height: 429px; }
.content { width: 693px; padding-left: 62px; margin-right: 18px; }
.path { height: 46px; padding: 0 0 1px 13px; display: flex; align-items: center; color: #44546f; font-size: 14.400px; }
.path .epic { margin-left: 7px; width: 88px; }
.path .sl { width: 21px; font-size: 18px; }
.path .bug { margin-right: 11px; }
.path span:last-child { font-size: 15px; letter-spacing: -.1px; }
.content h2 { height: 67px; font-size: 28px; font-weight: 600; line-height: 56px; letter-spacing: -.08px; }
.actions { display: flex; gap: 10px; align-items: center; height: 44px; font-weight: 600; letter-spacing: 0; }
.add-btn, .apps-btn { display: flex; align-items: center; background: #f1f2f4; gap: 8px; }
.add-btn { width: 86px; height: 44px; margin-left: -1px; padding-left: 11px; border: 2.500px solid #8270db; border-radius: 6px; }
.apps-btn { width: 90px; height: 40px; padding-left: 12px; border-radius: 4px; gap: 9px; }
.content h3 { margin-top: 36px; padding-left: 1px; font-size: 18px; font-weight: 600; line-height: 27px; height: 26px; }
.desc { line-height: 30px; letter-spacing: .02px; }
.content hr { width: 630px; height: 3px; margin: 18px 0 25px 1px; border: 0; background: #dcdfe4; }
.comment { display: flex; align-items: center; padding-left: 4px; gap: 22px; }
.ava { width: 40px; height: 40px; font-weight: 600; font-size: 16.400px; }
.field { width: 565px; height: 50px; padding: 7px 0 0 31px; line-height: 44px; border: 1px solid #7d899c; border-radius: 4px; color: #626f86; letter-spacing: .1px; }
.tip { margin: 12px 0 0 66px; color: #626f86; font-size: 14px; line-height: 22px; letter-spacing: .05px; }
.tip b { color: #44546f; font-weight: 700; letter-spacing: -.1px; }
.tip kbd { display: inline-block; width: 26px; height: 20px; margin: 0 1px; border-radius: 3px; background: #f1f2f4; text-align: center; font: 700 14px/20px "Open Sans", sans-serif; color: #44546f; }
.s2, .s3 { width: 21px; }
.side { width: 366px; margin: 0 37px 0 38px; overflow: hidden; }
.tools { height: 63px; padding: 0 8px 22px 142px; display: flex; align-items: center; color: #0c66e4; }
.tools span { margin: 0 26px 0 6.500px; }
.lock { width: 20px; height: 24px; }
.eye { width: 26px; height: 20px; margin-left: 21px; }
.like { width: 22px; height: 22px; }
.shr { width: 24px; height: 24px; margin: 0 16px 0 21.500px; }
.dts { width: 24px; height: 6px; color: #172b4d; }
.state { height: 59px; display: flex; font-weight: 600; line-height: 41px; letter-spacing: 0; }
.todo { width: 106px; letter-spacing: 0; }
.todo svg { margin-right: 18px; }
.bolt { width: 17px; height: 22px; margin: 9px 12px 0 28px; }
.state span { width: 72px; }
.state .c { width: 13px; height: 13px; margin-top: 14px; }
.pinned { height: 134px; padding: 17px 19px 0; border: 1px solid #dcdfe4; border-radius: 4px; }
.pt { height: 48px; display: flex; justify-content: space-between; line-height: 26px; letter-spacing: .08px; }
.pt svg { width: 16px; height: 16px; margin: 2px 1px; }
.pinned p { line-height: 25px; letter-spacing: .1px; }
.pinned p svg { display: inline-block; vertical-align: -3px; margin: 0 4px 0 1px; }
.details { height: 200px; margin-top: 13px; border: 1px solid #dcdfe4; border-radius: 5px; color: #44546f; }
.dh { height: 59px; padding: 0 27px 0 19px; display: flex; align-items: center; justify-content: space-between; border-bottom: 1px solid #dcdfe4; font-weight: 600; letter-spacing: -.1px; }
.dh svg { width: 14px; height: 14px; }
.db { padding: 24px 0 0 19px; }
.db b { display: block; line-height: 28px; font-size: 16px; }
.db div { height: 34px; display: flex; align-items: center; gap: 15px; padding-left: 2px; color: #2c3e5d; }
.pers2 { width: 30px; height: 30px; }

/* taskbar */
.taskbar { height: 60px; flex: none; display: flex; align-items: center; background: #1c1c1c; border-top: 1px solid #4a4a4a; color: #fff; font-size: 14.400px; }
.weather { width: 530px; padding-left: 25px; display: flex; gap: 3px; line-height: 20px; }
.weather span { display: block; }
.dim { color: #ccc; }
.badge { font: 13px "Open Sans", sans-serif; fill: #222; }
.win { width: 29px; height: 29px; }
.tsearch { width: 275px; height: 40px; margin-left: 17px; padding: 0 16px 0 13px; display: flex; align-items: center; border-radius: 20px; background: #3b3b3b; border: 1px solid #4c4c4c; font-size: 16.400px; color: #ccc; }
.tsearch span { margin-left: 12px; letter-spacing: 0; }
.flower { width: 44px; height: 36px; margin-left: auto; }
.apps { margin-left: 2px; display: flex; }
.apps > div { width: 51px; height: 50px; margin: 0 2px; display: grid; grid-template-rows: 46px 4px; place-items: center; border-radius: 5px; }
.apps svg { width: 29px; height: 29px; margin-top: 5px; }
.apps .run::after { content: ""; width: 8px; height: 4px; border-radius: 2px; background: #9a9a9a; }
.apps .cur { background: #2a2a2a; border: 1px solid #343434; }
.apps .cur::after { width: 20px; background: #60cdff; }
.tray { margin-left: auto; padding-right: 26px; display: flex; align-items: center; line-height: 20px; }
.caret { width: 14px; height: 8px; }
.lang { width: 50px; margin: 0 12px 0 16px; text-align: center; }
.tray span { display: block; }
.wifi { width: 20px; height: 16px; }
.vol { width: 20px; height: 16px; margin: 0 9px; }
.bat { width: 22px; height: 18px; }
.clock { width: 98px; text-align: right; margin-right: 10px; font-size: 14.800px; letter-spacing: .1px; }
.bell { width: 18px; height: 20px; }
```
